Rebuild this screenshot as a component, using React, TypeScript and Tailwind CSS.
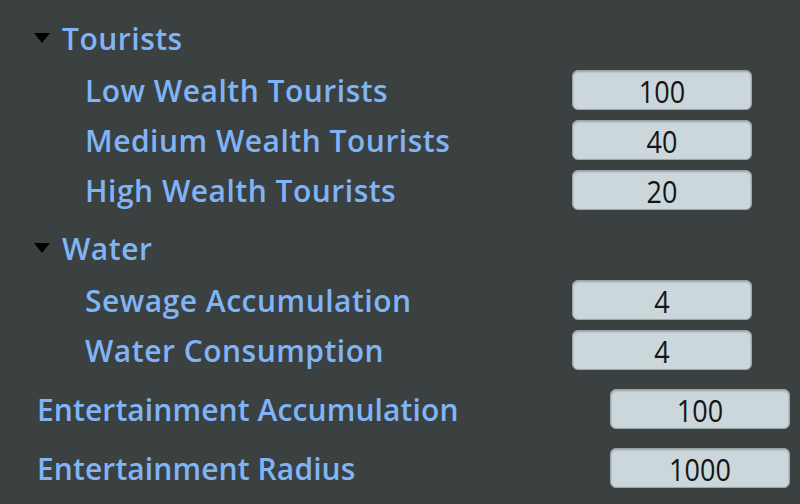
import React from 'react';

const font = { fontFamily: '"Open Sans", "Noto Sans", sans-serif' };

const Arrow = () => (
  <svg width="18" height="12" viewBox="0 0 18 12" className="shrink-0">
    <path d="M1 1 L17 1 L9 11 Z" fill="#000" />
  </svg>
);

const ValueBox: React.FC<{ value: string }> = ({ value }) => (
  <div className="w-[180px] h-[40px] rounded-[6px] bg-[#ccd7db] border border-[#9aa5aa] shadow-[inset_0_1px_2px_rgba(0,0,0,0.25)] flex items-center justify-center text-[27px] text-[#151515] leading-none">
    <span className="inline-block scale-y-[1.15]">{value}</span>
  </div>
);

const Label: React.FC<{ text: string; wide?: boolean }> = ({ text, wide = true }) => (
  <span
    className={
      wide
        ? 'inline-block text-[30px] font-semibold text-[#80b4f6] leading-none scale-y-[1.05] tracking-[0.5px]'
        : 'inline-block text-[30px] font-semibold text-[#80b4f6] leading-none scale-y-[1.05] tracking-[0.1px]'
    }
  >
    {text}
  </span>
);

const SubRow: React.FC<{ label: string; value: string }> = ({ label, value }) => (
  <div className="h-[40px] flex items-center pl-[85px] pr-[48px] justify-between">
    <Label text={label} />
    <ValueBox value={value} />
  </div>
);

const Section: React.FC<{ title: string; children: React.ReactNode }> = ({ title, children }) => (
  <div className="flex flex-col gap-[10px]">
    <div className="h-[40px] flex items-center pl-[33px] gap-[11px]">
      <Arrow />
      <Label text={title} />
    </div>
    <div className="flex flex-col gap-[10px] pt-[2px]">{children}</div>
  </div>
);

const TopRow: React.FC<{ label: string; value: string }> = ({ label, value }) => (
  <div className="h-[40px] flex items-center pl-[37px] pr-[10px] justify-between">
    <Label text={label} wide={false} />
    <ValueBox value={value} />
  </div>
);

export default function App() {
  return (
    <div style={font} className="w-[800px] h-[504px] bg-[#3a4140] overflow-hidden pt-[18px]">
      <Section title="Tourists">
        <SubRow label="Low Wealth Tourists" value="100" />
        <SubRow label="Medium Wealth Tourists" value="40" />
        <SubRow label="High Wealth Tourists" value="20" />
      </Section>
      <div className="h-[18px]" />
      <Section title="Water">
        <SubRow label="Sewage Accumulation" value="4" />
        <SubRow label="Water Consumption" value="4" />
      </Section>
      <div className="flex flex-col gap-[19px] pt-[19px]">
        <TopRow label="Entertainment Accumulation" value="100" />
        <TopRow label="Entertainment Radius" value="1000" />
      </div>
    </div>
  );
}
